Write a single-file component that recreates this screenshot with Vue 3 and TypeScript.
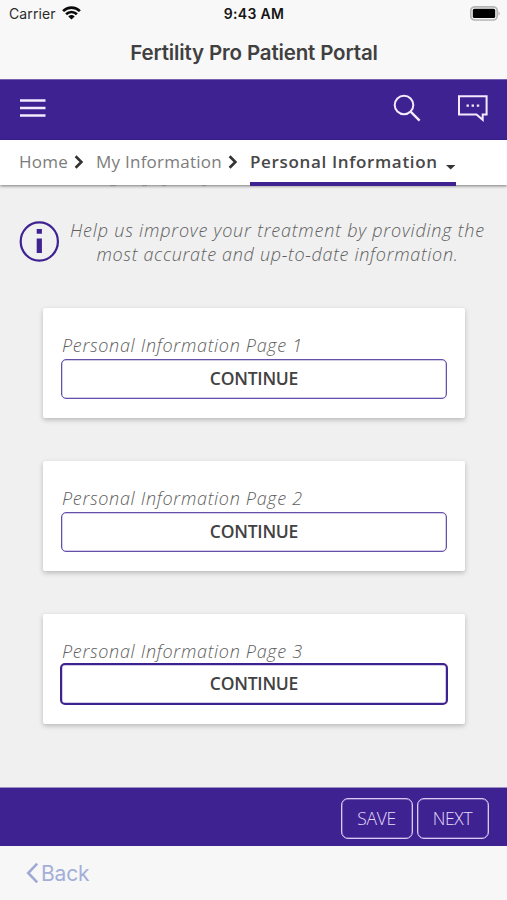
<script setup lang="ts">
interface FormPage {
  id: number
  title: string
  focused: boolean
}

const crumbs: string[] = ['Home', 'My Information']
const pages: FormPage[] = [
  { id: 1, title: 'Personal Information Page 1', focused: false },
  { id: 2, title: 'Personal Information Page 2', focused: false },
  { id: 3, title: 'Personal Information Page 3', focused: true },
]
</script>

<template>
  <div class="screen">
    <header class="status">
      <div class="carrier">
        <span>Carrier</span>
        <svg class="wifi" viewBox="0 0 19 14" width="19" height="14">
          <g fill="none" stroke="#0a0a0a" stroke-width="2.7">
            <path d="M1.1 5.1a12 12 0 0 1 16.8 0" />
            <path d="M4.1 8.2a7.7 7.7 0 0 1 10.8 0" />
          </g>
          <path d="M9.5 13.6L6.3 10.4a4.7 4.7 0 0 1 6.4 0z" fill="#0a0a0a" />
        </svg>
      </div>
      <span class="clock">9:43 AM</span>
      <svg class="battery" viewBox="0 0 31 15" width="31" height="15">
        <rect x=".8" y=".8" width="26.4" height="13.2" rx="4" fill="#f8f8f8" stroke="#b4b4b4" stroke-width="1.7" />
        <rect x="2.8" y="2.8" width="22.4" height="9.2" rx="1.6" fill="#000" />
        <path d="M28.5 5.2a2.7 2.7 0 0 1 0 4.6z" fill="#b4b4b4" />
      </svg>
    </header>
    <h1 class="title"><span>Fertility Pro Patient Portal</span></h1>

    <nav class="bar">
      <svg viewBox="0 0 26 18" width="26" height="18">
        <path d="M0 1.5h25.5M0 9h25.5M0 16.5h25.5" stroke="#f4eaff" stroke-width="2.5" />
      </svg>
      <div class="actions">
        <svg viewBox="0 0 28 28" width="28" height="28" fill="none" stroke="#f4eaff" stroke-width="2">
          <circle cx="11" cy="11" r="9.3" />
          <path d="M17.6 17.6l9 9" stroke-width="2.4" />
        </svg>
        <svg viewBox="0 0 30 27" width="30" height="27">
          <path d="M1 1.2h27.6v18.4h-3.9v5.2l-6.2-5.2H1z" fill="none" stroke="#f4eaff" stroke-width="2" />
          <path d="M8.5 10.6h2.4M13.6 10.6H16M18.8 10.6h2.4" stroke="#f4eaff" stroke-width="2.4" />
        </svg>
      </div>
    </nav>

    <nav class="crumbs">
      <template v-for="crumb in crumbs" :key="crumb">
        <span :class="['crumb', { wide: crumb !== 'Home' }]">{{ crumb }}</span>
        <svg class="chevron" viewBox="0 0 10 14" width="10" height="14">
          <path d="M1.6 1.3L7.4 7l-5.8 5.7" fill="none" stroke="#333" stroke-width="2.6" />
        </svg>
      </template>
      <div class="current">
        <span class="current-text">Personal Information</span>
        <svg class="caret" viewBox="0 0 10 5" width="10" height="5"><path d="M0 0h9.4L4.7 4.6z" fill="#333" /></svg>
      </div>
      <svg class="scrolled-edge" viewBox="0 0 100 2" width="100" height="2">
        <path d="M1 .6h6M33 .6h5M53 .6h4M93 .6h4" stroke="#888" stroke-width="1" />
      </svg>
    </nav>

    <main class="content">
      <section class="notice">
        <svg viewBox="0 0 40 41" width="40" height="41">
          <ellipse cx="20.3" cy="20.5" rx="18.6" ry="19.1" fill="none" stroke="#3f2292" stroke-width="2.2" />
          <path d="M17.7 8h5.2v4.8h-5.2zM17.7 17.5h5.2V32h-5.2z" fill="#3f2292" />
        </svg>
        <p class="help">
          <span class="line-one">Help us improve your treatment by providing the</span><br />
          <span class="line-two">most accurate and up-to-date information.</span>
        </p>
      </section>

      <article v-for="page in pages" :key="page.id" class="card">
        <h2 class="card-title">{{ page.title }}</h2>
        <button type="button" :class="['continue', { focused: page.focused }]">CONTINUE</button>
      </article>
    </main>

    <footer class="footer">
      <button type="button" class="foot-btn">SAVE</button>
      <button type="button" class="foot-btn">NEXT</button>
    </footer>
    <div class="toolbar">
      <svg viewBox="0 0 13 22" width="13" height="22">
        <path d="M11.2 1.7L2.2 11l9 9.3" fill="none" stroke="#9eaad5" stroke-width="2.6" />
      </svg>
      <span class="back">Back</span>
    </div>
  </div>
</template>

<style>
body {
  margin: 0;
}
</style>

<style scoped>
.screen {
  width: 507px;
  height: 900px;
  display: flex;
  flex-direction: column;
  overflow: hidden;
  background: #f8f8f8;
  font-family: 'Open Sans', 'Noto Sans', sans-serif;
  white-space: nowrap;
}
.screen * {
  box-sizing: border-box;
}
svg {
  display: block;
  flex: none;
}
.status {
  height: 28px;
  flex: none;
  display: grid;
  grid-template-columns: 1fr auto 1fr;
  align-items: center;
  padding: 0 6px 0 9px;
  font-family: Inter, 'Liberation Sans', sans-serif;
  font-size: 14px;
  line-height: 28px;
  color: #2c2c2c;
}
.carrier {
  display: flex;
  align-items: center;
  gap: 6px;
  letter-spacing: 0.1px;
}
.wifi {
  margin-top: -2px;
}
.clock {
  margin-left: -2px;
  font-weight: 600;
  letter-spacing: 0.3px;
  color: #151515;
}
.battery {
  justify-self: end;
  margin-top: -1px;
}
.title {
  height: 51px;
  flex: none;
  margin: 0;
  padding-left: 1px;
  text-align: center;
  font-family: Inter, 'Liberation Sans', sans-serif;
  font-size: 20.5px;
  line-height: 49px;
  font-weight: 600;
  letter-spacing: -0.15px;
  color: #404040;
}
.bar {
  height: 61px;
  flex: none;
  display: flex;
  align-items: center;
  justify-content: space-between;
  padding: 0 19px 4px 20px;
  background: #3f2292;
  border-top: 1px solid #7661b1;
}
.bar > svg {
  margin-top: -1px;
}
.actions {
  display: flex;
  align-items: center;
  gap: 37px;
}
.crumbs {
  position: relative;
  height: 45px;
  flex: none;
  display: flex;
  align-items: flex-start;
  padding-left: 19px;
  background: #fff;
  box-shadow: 0 1px 3px rgba(0, 0, 0, 0.5);
  font-size: 17px;
  line-height: 44px;
  color: #7c7c7c;
}
.crumb {
  width: 55px;
  letter-spacing: 0.25px;
}
.crumb.wide {
  width: 132px;
}
.chevron {
  margin: 15px 12px 0 0;
}
.current {
  display: flex;
  width: 206px;
  height: 46px;
  border-bottom: 4px solid #3f2292;
}
.current-text {
  width: 196px;
  font-weight: 600;
  letter-spacing: 0.65px;
  color: #484848;
}
.caret {
  margin-top: 25px;
}
.scrolled-edge {
  position: absolute;
  left: 109px;
  top: 45px;
}
.content {
  flex: 1;
  display: flex;
  flex-direction: column;
  padding: 33px 42px 0 43px;
  background: #f0f0f0;
}
.notice {
  display: flex;
  margin: 0 -24px 47px -24px;
  height: 43px;
  align-items: flex-start;
}
.notice svg {
  margin-top: 3px;
}
.help {
  margin: 0 0 0 9px;
  width: 419px;
  text-align: center;
  font-size: 18px;
  line-height: 24px;
  font-weight: 300;
  font-style: italic;
  color: #606060;
}
.line-one {
  letter-spacing: 0.8px;
}
.line-two {
  letter-spacing: 0.68px;
}
.card {
  height: 110px;
  flex: none;
  margin-bottom: 43px;
  padding: 25px 18px 0;
  background: #fff;
  border-radius: 2px;
  box-shadow: 0 2px 5px rgba(0, 0, 0, 0.23);
}
.card-title {
  height: 26px;
  margin: 0 0 0 1px;
  font-size: 18px;
  line-height: 24px;
  font-weight: 300;
  font-style: italic;
  letter-spacing: 0.69px;
  color: #606060;
}
.continue {
  display: block;
  width: 386px;
  height: 40px;
  padding: 0 0 2px;
  border: 1px solid #6550aa;
  border-radius: 5px;
  background: #fff;
  box-shadow: inset 0 0 0 0.5px #a79acf;
  font: 600 17.5px/36px 'Open Sans', sans-serif;
  letter-spacing: -0.25px;
  color: #424242;
}
.continue.focused {
  width: 388px;
  height: 42px;
  margin: -2px -1px 0;
  border: 2px solid #3f2292;
}
.footer {
  height: 59px;
  flex: none;
  display: flex;
  align-items: center;
  justify-content: flex-end;
  gap: 4px;
  padding: 2px 18px 0 0;
  background: #3f2292;
  border-top: 1px solid #9c8fc1;
}
.foot-btn {
  width: 72px;
  height: 41px;
  padding: 0 1px 1px 0;
  border: 1px solid #d9cbf6;
  border-radius: 7px;
  background: transparent;
  box-shadow: inset 0 0 0 0.5px #a394d0;
  font: 300 17.5px/36px 'Open Sans', sans-serif;
  letter-spacing: -0.3px;
  color: #e6dcfa;
}
.toolbar {
  height: 54px;
  flex: none;
  display: flex;
  align-items: center;
  padding-left: 26px;
  gap: 2px;
  background: #f7f7f7;
}
.back {
  font-family: Inter, 'Liberation Sans', sans-serif;
  font-size: 21px;
  line-height: 54px;
  padding-top: 1px;
  letter-spacing: -0.2px;
  color: #a3afd8;
}
</style>
